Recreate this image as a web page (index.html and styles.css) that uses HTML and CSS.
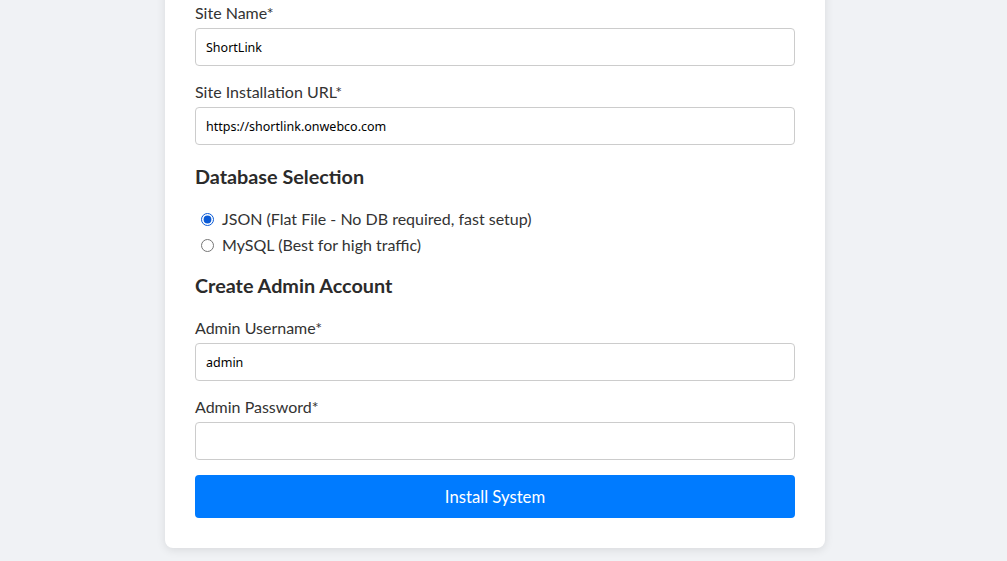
FILE: index.html
```html
<!DOCTYPE html>
<html lang="en">
<head>
<meta charset="utf-8">
<title>ShortLink Installer</title>
<link rel="stylesheet" href="styles.css">
</head>
<body>
<div class="page">
  <form class="card">
    <div class="form-group">
      <label class="label" for="site_name">Site Name*</label>
      <input class="input" id="site_name" type="text" value="ShortLink">
    </div>
    <div class="form-group">
      <label class="label" for="site_url">Site Installation URL*</label>
      <input class="input" id="site_url" type="text" value="https://shortlink.onwebco.com">
    </div>

    <h3 class="section-title">Database Selection</h3>
    <div class="radio-group">
      <label class="radio"><input type="radio" name="db" value="json" checked> JSON (Flat File - No DB required, fast setup)</label>
      <label class="radio"><input type="radio" name="db" value="mysql"> MySQL (Best for high traffic)</label>
    </div>

    <h3 class="section-title admin-title">Create Admin Account</h3>
    <div class="form-group">
      <label class="label" for="admin_user">Admin Username*</label>
      <input class="input" id="admin_user" type="text" value="admin">
    </div>
    <div class="form-group">
      <label class="label" for="admin_pass">Admin Password*</label>
      <input class="input" id="admin_pass" type="password" value="">
    </div>

    <button class="btn" type="button">Install System</button>
  </form>
</div>
</body>
</html>
```

FILE: styles.css
```css
* { box-sizing: border-box; }

html, body {
  margin: 0;
  padding: 0;
  background: #f0f2f5;
  font-family: "Lato", "Noto Sans", sans-serif;
  color: #333;
}

.page {
  display: flex;
  justify-content: center;
  padding-right: 17px;
  padding-bottom: 13px;
}

.card {
  width: 660px;
  margin-top: -28px;
  padding: 30px 30px 30px;
  background: #fff;
  border-radius: 8px;
  box-shadow: 0 2px 10px rgba(0, 0, 0, 0.1);
  display: flex;
  flex-direction: column;
}

.form-group {
  display: flex;
  flex-direction: column;
  margin-bottom: 15px;
}

.label {
  font-size: 16px;
  line-height: 21px;
  margin-bottom: 5px;
}

.input {
  height: 38px;
  padding: 0 10px;
  border: 1px solid #ccc;
  border-radius: 4px;
  font-family: "Noto Sans", sans-serif;
  font-size: 12.5px;
  color: #000;
  background: #fff;
}

.section-title {
  font-size: 19.8px;
  line-height: 22px;
  font-weight: 700;
  margin: 5px 0 19px;
  color: #2b2b2b;
}

.admin-title {
  margin-top: 16px;
  margin-bottom: 21px;
}

.radio-group {
  display: flex;
  flex-direction: column;
}

.radio {
  font-size: 16px;
  line-height: 26px;
  display: flex;
  align-items: center;
}

.radio input {
  width: 13px;
  height: 13px;
  margin: 0 8px 0 6px;
  accent-color: #0a5ad6;
}

.btn {
  margin-top: 0;
  height: 43px;
  border: 0;
  border-radius: 4px;
  background: #007bff;
  color: #fff;
  font-family: "Lato", sans-serif;
  font-size: 16.7px;
  cursor: pointer;
}
```
